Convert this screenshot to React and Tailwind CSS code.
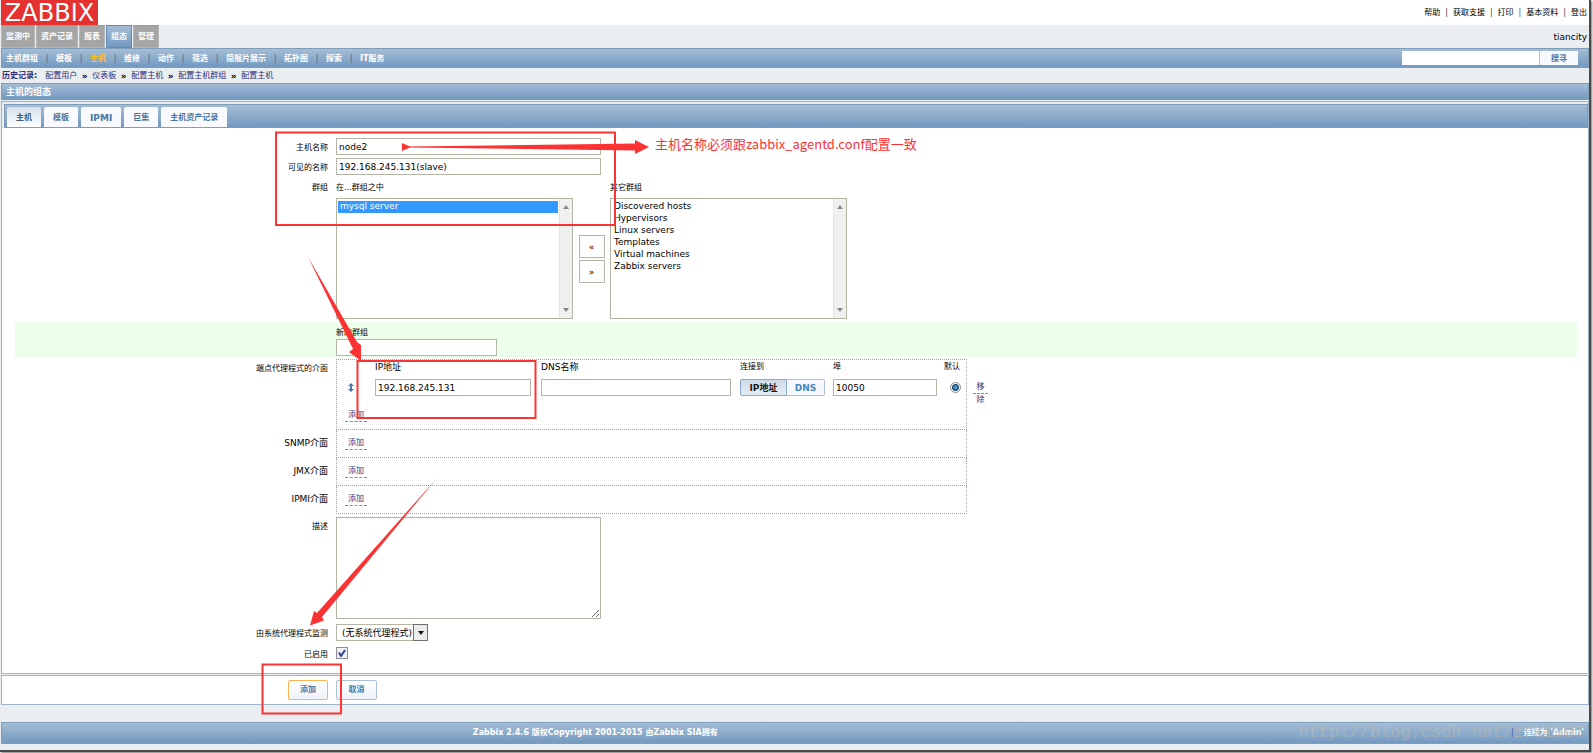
import { Fragment } from 'react';

const TOP_LINKS = ['帮助', '获取支援', '打印', '基本资料', '登出'];
const MAIN_TABS = ['监测中', '资产记录', '报表', '组态', '管理'];
const SUB_MENU = ['主机群组', '模板', '主机', '维修', '动作', '筛选', '简报片展示', '拓扑图', '探索', 'IT服务'];
const HISTORY = ['配置用户', '仪表板', '配置主机', '配置主机群组', '配置主机'];
const FORM_TABS = ['主机', '模板', 'IPMI', '巨集', '主机资产记录'];
const OTHER_GROUPS = [
  'Discovered hosts',
  'Hypervisors',
  'Linux servers',
  'Templates',
  'Virtual machines',
  'Zabbix servers',
];

const barCls = 'border border-[#7f9db9] bg-linear-to-b from-[#a5bdd5] to-[#7399c0]';
const fieldCls = 'h-[17px] border border-[#b5b5a5] bg-white px-[2px] text-[9px] text-black outline-none';
const linkCls = 'border-b border-dashed border-[#8a83bd] px-[3px] text-[8px] leading-[12px] text-[#3a3080]';
const btnCls = 'h-5 rounded-[2px] border bg-linear-to-b from-white to-[#eef3f9] text-[8px] font-bold text-[#4a78a8]';

function Row({ label, htmlFor, children, className = '', labelClass = 'pt-[4px] text-[8px]' }) {
  return (
    <div className={`flex ${className}`}>
      <label htmlFor={htmlFor} className={`w-[313px] shrink-0 text-right leading-[12px] ${labelClass}`}>
        {label}
      </label>
      <div className="ml-2 min-w-0 flex-1">{children}</div>
    </div>
  );
}

function ListBox({ id, items, selected }) {
  return (
    <div className="flex h-[121px] w-[237px] border border-[#b5b5a5] bg-white">
      <select
        id={id}
        multiple
        defaultValue={selected}
        className="h-full min-w-0 flex-1 appearance-none overflow-hidden px-px py-[2px] text-[9px] outline-none"
      >
        {items.map((t) => (
          <option
            key={t}
            className="h-[12px] min-h-0 px-[2px] py-0 leading-[12px] checked:bg-[linear-gradient(#3399ff,#3399ff)] checked:[-webkit-text-fill-color:white]"
          >
            {t}
          </option>
        ))}
      </select>
      <div className="flex w-[13px] flex-col items-center justify-between border-l border-[#e4e4e4] bg-[#f0f0f0] py-[6px]">
        <svg width="6" height="4" viewBox="0 0 6 4"><path d="M0 4L3 0L6 4Z" fill="#888" /></svg>
        <svg width="6" height="4" viewBox="0 0 6 4"><path d="M0 0L3 4L6 0Z" fill="#888" /></svg>
      </div>
    </div>
  );
}

function AgentInterface() {
  return (
    <div className="flex">
      <div className="h-[71px] w-[631px] border border-dotted border-[#98a3d6]">
        <table className="w-full table-fixed border-collapse text-left text-[8px]">
          <colgroup>
            <col className="w-[38px]" />
            <col className="w-[166px]" />
            <col className="w-[199px]" />
            <col className="w-[93px]" />
            <col className="w-[111px]" />
            <col />
          </colgroup>
          <thead>
            <tr className="h-[19px] align-top leading-[14px]">
              <td />
              <th className="text-[9px] font-normal">IP地址</th>
              <th className="text-[9px] font-normal">DNS名称</th>
              <th className="font-normal">连接到</th>
              <th className="font-normal">埠</th>
              <th className="font-normal whitespace-nowrap">默认</th>
            </tr>
          </thead>
          <tbody>
            <tr className="h-[17px]">
              <td className="pl-[11px]">
                <svg width="6" height="9" viewBox="0 0 6 9">
                  <path d="M3 0L6 3H4V6H6L3 9L0 6H2V3H0Z" fill="#4a78a8" />
                </svg>
              </td>
              <td><input aria-label="IP地址" defaultValue="192.168.245.131" className={`${fieldCls} block w-[156px]`} /></td>
              <td><input aria-label="DNS名称" className={`${fieldCls} block w-[190px]`} /></td>
              <td>
                <div className="flex text-[9px] font-bold">
                  <button type="button" className="h-[17px] w-[47px] rounded-l-[2px] border border-[#8aa9c8] bg-linear-to-b from-[#cddbe9] to-[#e4edf5] text-[#1a1a1a]">
                    IP地址
                  </button>
                  <button type="button" className="h-[17px] w-[38px] rounded-r-[2px] border border-l-0 border-[#a9c0d8] bg-[#f5f9fd] text-[#4a85b8]">
                    DNS
                  </button>
                </div>
              </td>
              <td><input aria-label="埠" defaultValue="10050" className={`${fieldCls} block w-[104px]`} /></td>
              <td>
                <input
                  type="radio"
                  aria-label="默认"
                  defaultChecked
                  className="ml-[6px] block size-[11px] appearance-none rounded-full border border-[#8a8f94] bg-[radial-gradient(circle,#5cc4ee_0,#15466f_3px,#ffffff_4px)]"
                />
              </td>
            </tr>
          </tbody>
        </table>
        <div className="mt-[12px] ml-2">
          <a href="#add" className={`${linkCls} inline-block`}>添加</a>
        </div>
      </div>
      <a href="#remove" className="mt-[22px] ml-[6px] w-[15px] text-center text-[8px] leading-[12px] text-[#3a3080]">
        <span className="block border-b border-dashed border-[#8a83bd]">移</span>
        <span className="block">除</span>
      </a>
    </div>
  );
}

// Red boxes and arrows drawn over the form.
function Annotations() {
  return (
    <>
      <svg className="pointer-events-none absolute top-0 left-0" width="660" height="740" viewBox="0 0 660 740">
        <g fill="none" stroke="#fb3433" strokeWidth="2">
          <rect x="276" y="132.500" width="339" height="92.500" />
          <rect x="357.500" y="361" width="178" height="57" />
          <rect x="262.500" y="664.500" width="78.500" height="49" />
        </g>
        <g fill="#fb3433">
          <path d="M402 143L411 147L402 151Z" />
          <path d="M408 146.500L635 143.500V140L649 147L635 154V150.500L408 147.500Z" />
          <path d="M308 257L357 342L361 345V361L349 352L353 349Z" />
          <path d="M437 478L322 617L324 620.500L310 625.500L314 611L317 613Z" />
        </g>
      </svg>
      <p className="pointer-events-none absolute top-[134px] left-[655px] font-['Noto_Sans_CJK_SC',sans-serif] text-[13px] leading-[20px] whitespace-nowrap text-[#fb3433]">
        主机名称必须跟zabbix_agentd.conf配置一致
      </p>
    </>
  );
}

export default function App() {
  return (
    <div className="relative bg-white pr-[2px] pb-[2px] font-['DejaVu_Sans','Noto_Sans_CJK_SC',sans-serif] text-[9px] leading-[12px] text-black">
      <div className="border-r-2 border-b-2 border-[#4a4a4a] bg-[#eaeef1] pl-px shadow-[1px_1px_2px_#777]">
        <header className="flex h-[25px] items-center justify-between bg-white">
          <a href="#home" className="flex h-[25px] w-[97px] items-center justify-center bg-[#e33230] text-[24px] leading-[28px] text-white">
            ZABBIX
          </a>
          <nav className="flex pt-px pr-[2px] text-[8px]">
            {TOP_LINKS.map((t, i) => (
              <Fragment key={t}>
                {i > 0 && <span className="px-[5px] text-[#444]">|</span>}
                <a href="#top">{t}</a>
              </Fragment>
            ))}
          </nav>
        </header>

        <div className="flex h-[23px] items-center justify-between">
          <nav className="flex h-full gap-px text-[8px] font-bold text-white">
            {MAIN_TABS.map((t) => (
              <a
                key={t}
                href="#tab"
                className={`flex items-center border px-1 pt-px ${
                  t === '组态'
                    ? 'border-[#5f8db8] bg-linear-to-b from-[#a5bdd5] to-[#7399c0]'
                    : 'border-[#b5b5b5] border-t-[#999] bg-[#a5a5a5]'
                }`}
              >
                {t}
              </a>
            ))}
          </nav>
          <span className="pr-[2px]">tiancity</span>
        </div>

        <div className={`flex h-5 items-center justify-between pr-[10px] pl-[4px] ${barCls}`}>
          <nav className="flex pt-[2px] text-[8px] font-bold text-white">
            {SUB_MENU.map((t, i) => (
              <Fragment key={t}>
                {i > 0 && <span className="w-[18px] text-center font-normal text-[#4d5a9a]">|</span>}
                <a href="#menu" className={t === '主机' ? 'text-[#f5c02c]' : ''}>{t}</a>
              </Fragment>
            ))}
          </nav>
          <form className="flex">
            <input aria-label="搜寻" className="h-[14px] w-[137px] bg-white px-1 outline-none" />
            <button type="button" className="h-[14px] w-[39px] border-l border-[#a9c0d8] bg-[#f6f9fd] pt-px text-[8px] font-bold text-[#4a78a8]">
              搜寻
            </button>
          </form>
        </div>

        <nav className="flex h-[15px] items-center pt-px pl-px text-[8px] text-[#2f2d78]">
          <span className="mr-2 font-bold">历史记录:</span>
          {HISTORY.map((t, i) => (
            <Fragment key={i}>
              {i > 0 && <span className="w-[15px] text-center text-[9px] font-bold text-black">»</span>}
              <a href="#history">{t}</a>
            </Fragment>
          ))}
        </nav>

        <h1 className={`flex h-[17px] items-center pt-px pl-[4px] text-[9px] font-bold text-white ${barCls}`}>主机的组态</h1>

        <main className="mt-px border border-[#9db4ca] bg-white">
          <div className="border-t-2 border-l-2 border-[#eaeef1]">
            <div className={`flex h-6 items-end gap-[3px] pl-[2px] ${barCls}`}>
              {FORM_TABS.map((t) => (
                <button
                  key={t}
                  type="button"
                  className={`h-[20px] rounded-t-[2px] px-[9px] pt-[2px] font-bold ${
                    t === 'IPMI' ? 'text-[9px]' : 'text-[8px]'
                  } ${t === '主机' ? 'bg-linear-to-b from-[#d5e0eb] to-white text-[#3f5f80]' : 'bg-[#f8fafd] text-[#4a78a8]'}`}
                >
                  {t}
                </button>
              ))}
            </div>
          </div>

          <form className="mr-[11px] ml-[13px] pt-[10px] pb-[12px]">
            <Row label="主机名称" htmlFor="host">
              <input id="host" defaultValue="node2" className={`${fieldCls} block w-[265px]`} />
            </Row>
            <Row label="可见的名称" htmlFor="visible" className="mt-[3px]">
              <input id="visible" defaultValue="192.168.245.131(slave)" className={`${fieldCls} block w-[265px]`} />
            </Row>
            <Row label="群组" htmlFor="groups" className="mt-[3px]">
              <div className="flex text-[8px]">
                <div>
                  <label htmlFor="groups" className="block pt-[4px] pb-[4px]">在...群组之中</label>
                  <ListBox id="groups" items={['mysql server']} selected={['mysql server']} />
                </div>
                <div className="flex w-[37px] flex-col items-center gap-[2px] pt-[57px]">
                  <button type="button" className="h-[23px] w-[26px] border border-[#b5b5a5] bg-white text-[9px]">«</button>
                  <button type="button" className="h-[23px] w-[26px] border border-[#b5b5a5] bg-white text-[9px]">»</button>
                </div>
                <div>
                  <label htmlFor="others" className="block pt-[4px] pb-[4px]">其它群组</label>
                  <ListBox id="others" items={OTHER_GROUPS} selected={[]} />
                </div>
              </div>
            </Row>
            <Row className="mt-[3px] bg-[#ebffeb] pb-px">
              <label htmlFor="newgroup" className="block pt-[5px] text-[8px]">新的群组</label>
              <input id="newgroup" className={`${fieldCls} block w-[161px]`} />
            </Row>
            <Row label="端点代理程式的介面" className="mt-[2px]">
              <AgentInterface />
            </Row>
            {['SNMP介面', 'JMX介面', 'IPMI介面'].map((t) => (
              <Row key={t} label={t} labelClass="pt-[7px] text-[9px]">
                <div className="h-7 w-[631px] border border-t-0 border-dotted border-[#98a3d6] pt-[6px] pl-2">
                  <a href="#add" className={`${linkCls} inline-block`}>添加</a>
                </div>
              </Row>
            ))}
            <Row label="描述" htmlFor="desc" className="mt-[3px]">
              <textarea id="desc" className="block h-[102px] w-[265px] resize border border-[#b5b5a5] bg-white outline-none" />
            </Row>
            <Row label="由系统代理程式监测" htmlFor="proxy" className="mt-[5px]">
              <div className="relative w-[92px]">
                <select id="proxy" className={`${fieldCls} block w-full appearance-none pl-[5px] text-[8px]`}>
                  <option>(无系统代理程式)</option>
                </select>
                <span className="pointer-events-none absolute top-0 right-0 grid h-[17px] w-[15px] place-items-center border border-[#707070] bg-[#ececec]">
                  <svg width="6" height="4" viewBox="0 0 6 4"><path d="M0 0L3 4L6 0Z" fill="#111" /></svg>
                </span>
              </div>
            </Row>
            <Row label="已启用" htmlFor="enabled" className="mt-[4px]">
              <div className="relative mt-[2px] size-[12px]">
                <input id="enabled" type="checkbox" defaultChecked className="block size-[12px] appearance-none border border-[#8e8f8f] bg-[#eef0f4]" />
                <svg className="pointer-events-none absolute top-[2px] left-[2px]" width="8" height="8" viewBox="0 0 8 8">
                  <path d="M1 3.500L3 7L7 1" fill="none" stroke="#33418f" strokeWidth="2" />
                </svg>
              </div>
            </Row>
          </form>
        </main>

        <div className="mt-px flex h-[30px] items-center gap-2 border border-[#9db4ca] bg-white pl-[286px]">
          <button type="button" className={`${btnCls} w-[40px] border-[#fbb450]`}>添加</button>
          <button type="button" className={`${btnCls} w-[41px] border-[#a9c0d8]`}>取消</button>
        </div>

        <footer className={`relative mt-[17px] mb-[6px] flex h-[22px] items-center pr-[4px] text-[8px] font-bold text-white ${barCls}`}>
          <p className="w-3/4 text-center">Zabbix 2.4.6 版权Copyright 2001-2015 由Zabbix SIA拥有</p>
          <p className="flex-1 text-right">
            <span className="mr-[10px] font-normal text-[#4d5a9a]">|</span>连接为 'Admin'
          </p>
          <span className="pointer-events-none absolute right-[4px] font-['Liberation_Mono',monospace] text-[17px] font-normal text-[#b9bab4]/60">
            http://blog.csdn.net/zfk1997
          </span>
        </footer>
      </div>
      <Annotations />
    </div>
  );
}
